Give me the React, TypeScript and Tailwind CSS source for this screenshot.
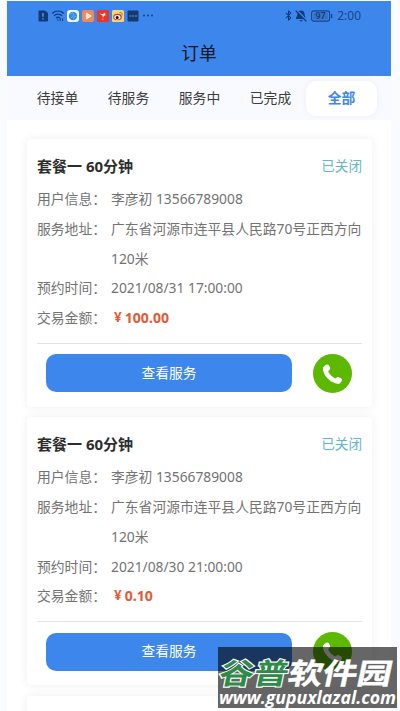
import React from "react";
import { Bluetooth, BellOff } from "lucide-react";

const tabs = ["待接单", "待服务", "服务中", "已完成", "全部"];

const orders = [
  {
    id: 1,
    title: "套餐一 60分钟",
    status: "已关闭",
    user: "李彦初 13566789008",
    address: "广东省河源市连平县人民路70号正西方向120米",
    time: "2021/08/31 17:00:00",
    amount: "100.00",
  },
  {
    id: 2,
    title: "套餐一 60分钟",
    status: "已关闭",
    user: "李彦初 13566789008",
    address: "广东省河源市连平县人民路70号正西方向120米",
    time: "2021/08/30 21:00:00",
    amount: "0.10",
  },
];

function StatusBar() {
  return (
    <div className="flex h-[29px] items-center justify-between pl-[30px] pr-[30px] text-[#123a78]">
      <div className="flex items-center gap-[3px]">
        <svg className="h-3 w-3" viewBox="0 0 12 12">
          <path d="M2.5 0.5H8L11 3v7.5a1 1 0 0 1-1 1H2.5a1 1 0 0 1-1-1v-9a1 1 0 0 1 1-1z" fill="#123a78" />
          <path d="M6 3v3.8M6 8.2v1.3" stroke="#5f9bea" strokeWidth="1.4" />
        </svg>
        <svg className="h-3 w-3" viewBox="0 0 12 12" fill="none" stroke="#123a78" strokeWidth="1.3">
          <path d="M0.3 3.4c3.4-3 8-3 11.4 0M2 5.8c2.5-2 5.5-2 8 0M3.9 8c1.4-1 2.8-1 4 0" />
          <circle cx="5.8" cy="10" r="0.8" fill="#123a78" stroke="none" />
          <path d="M8.2 8v3M10.6 11V8.4" strokeWidth="1" />
        </svg>
        <svg className="h-3 w-3" viewBox="0 0 12 12">
          <rect width="12" height="12" rx="3" fill="#f3f9ff" />
          <circle cx="6" cy="6" r="4.2" fill="#3188e3" />
          <path d="M3 4.5l3-1.8 1 2.5-3 3M6.5 9.5l1-3 2.7-.5" stroke="#a7d4fa" strokeWidth="0.5" fill="none" />
        </svg>
        <svg className="h-3 w-3" viewBox="0 0 12 12">
          <rect width="12" height="12" rx="2.5" fill="#ed8a55" />
          <path d="M4 3.3l5 2.7-5 2.7M3.6 6h2.8" stroke="#fff" strokeWidth="1.4" fill="none" strokeLinejoin="round" />
        </svg>
        <svg className="h-3 w-3" viewBox="0 0 12 12">
          <rect width="12" height="12" rx="1.5" fill="#e93628" />
          <path d="M2.5 3.5l3 .8L8.5 2.5 7.8 4.5l1.7.5-2.7.8-.8 2-.6-2.4z" fill="#fff" />
          <path d="M5 9.3h1.5" stroke="#f7b7ae" strokeWidth="0.8" />
        </svg>
        <svg className="h-3 w-3" viewBox="0 0 12 12">
          <rect width="12" height="12" rx="1.5" fill="#f4d579" />
          <ellipse cx="5.5" cy="7" rx="4.3" ry="3.3" fill="#d73b27" />
          <ellipse cx="5.4" cy="7.2" rx="3" ry="2.2" fill="#fff" />
          <circle cx="5.2" cy="7.4" r="1.5" fill="#111" />
          <path d="M7.5 2.5c2-.3 3 1 2.6 2.8" stroke="#d8632a" strokeWidth="1" fill="none" />
        </svg>
        <svg className="h-3 w-3" viewBox="0 0 12 12">
          <rect x="0.5" y="0.5" width="11" height="11" rx="1" fill="#163a6e" />
          <path d="M2.5 6H10" stroke="#5279b0" strokeWidth="1.6" strokeDasharray="2 .8" />
        </svg>
        <svg className="h-3 w-3" viewBox="0 0 12 12" fill="#123a78">
          <circle cx="2" cy="5.5" r="0.9" />
          <circle cx="6" cy="5.5" r="0.9" />
          <circle cx="10" cy="5.5" r="0.9" />
        </svg>
      </div>
      <div className="flex items-center">
        <Bluetooth className="h-[13px] w-[11px]" strokeWidth={2.2} />
        <BellOff className="ml-px h-3 w-3" strokeWidth={2.2} fill="currentColor" />
        <svg className="ml-1 h-3 w-[22px]" viewBox="0 0 22 12">
          <rect x="0.6" y="0.9" width="18" height="10.2" rx="2.4" fill="none" stroke="#1b4585" strokeWidth="1.1" />
          <rect x="2.2" y="2.5" width="14.8" height="7" rx="1" fill="#3473c9" />
          <path d="M20.6 4v4" stroke="#1b4585" strokeWidth="1.4" />
          <text x="9.6" y="9.2" textAnchor="middle" fontSize="9" fontFamily="Roboto" fill="#0d2c5c">
            97
          </text>
        </svg>
        <span className="ml-1 font-['Noto_Sans',sans-serif] text-[12px] leading-3 text-[#1b4585]">
          2:00
        </span>
      </div>
    </div>
  );
}

function Row({ label, children }: { label: string; children: React.ReactNode }) {
  return (
    <div className="flex text-[13.8px] leading-[29.75px] text-[#737373]">
      <span className="w-[74px] shrink-0 whitespace-nowrap">{label}：</span>
      <span className="min-w-0 flex-1 break-all">{children}</span>
    </div>
  );
}

function OrderCard({ order }: { order: (typeof orders)[number] }) {
  return (
    <div className="h-[268px] shrink-0 rounded-[4px] bg-white px-2.5 pt-3 shadow-[0_0_10px_rgba(0,0,0,0.07)]">
      <div className="mb-[3px] flex h-[30px] items-center justify-between">
        <h3 className="text-[15px] font-bold text-[#2d2d2d]">{order.title}</h3>
        <span className="text-[13.6px] text-[#62b7cd]">{order.status}</span>
      </div>
      <Row label="用户信息">{order.user}</Row>
      <Row label="服务地址">{order.address}</Row>
      <Row label="预约时间">{order.time}</Row>
      <Row label="交易金额">
        <span className="flex pl-[3px] font-bold text-[#e45a35]">
          <span className="mr-[3px] text-[13.5px]">¥</span>
          <span className="text-[14.1px]">{order.amount}</span>
        </span>
      </Row>
      <div className="mt-2.5 flex items-center border-t border-[#e4e4e4] pl-[9px] pt-2.5">
        <button className="h-[38px] w-[246px] rounded-[10px] bg-[#3d87ec] text-[13.8px] text-white">
          查看服务
        </button>
        <div className="ml-[21px] h-[39px] w-[39px] rounded-full bg-[#5cb800]">
          <svg
            className="h-[39px] w-[39px]"
            viewBox="0 0 39 39"
            fill="none"
            stroke="#fff"
            strokeLinecap="round"
            strokeLinejoin="round"
          >
            <path d="M12.2 14.5C12.5 20.5 18.5 26.800 25 27.5" strokeWidth="4.6" />
            <path d="M12.6 13.6L14.2 12.5L15.2 14.4L14 15.6" strokeWidth="4" />
            <path d="M23.8 26.2L25 25L27 26L25.8 27.7" strokeWidth="4" />
          </svg>
        </div>
      </div>
    </div>
  );
}

function Watermark() {
  return (
    <div className="absolute left-[218px] top-[647px] h-[61px] w-[179px] bg-black/60 text-white">
      <div className="flex h-[41px] items-center justify-center">
        <div className="-skew-x-10 scale-y-[0.84] whitespace-nowrap pt-[9px] font-['Noto_Sans_CJK_SC',sans-serif] text-[34.5px] font-bold leading-[40px]">
          <span className="text-[#2e8b48] [-webkit-text-stroke:2.6px_white] [paint-order:stroke_fill]">谷普</span>
          <span className="[-webkit-text-stroke:0.5px_white]">软件园</span>
        </div>
      </div>
      <div className="flex h-[19px] items-center justify-center whitespace-nowrap font-['Open_Sans',sans-serif] text-[17.7px] font-bold italic leading-[19px]">
        www.gupuxlazal.com
      </div>
    </div>
  );
}

export default function App() {
  return (
    <div
      lang="zh-CN"
      className="relative h-[711px] w-[400px] overflow-hidden bg-[#fafbff] pl-[7px] pr-[9px] pt-px font-['Noto_Sans','Noto_Sans_CJK_SC',sans-serif]"
    >
      <div className="flex h-[710px] flex-col overflow-hidden bg-white">
        <header className="h-[75px] shrink-0 bg-[#3d87ec]">
          <StatusBar />
          <h1 className="text-center text-[17.8px] leading-[46px] text-[#0b1524]">订单</h1>
        </header>

        <nav className="flex h-11 shrink-0 items-center bg-[#f9faff] pl-[15px]">
          {tabs.map((tab) =>
            tab === "全部" ? (
              <div
                key={tab}
                className="flex h-[35px] w-[71px] items-center justify-center rounded-[10px] bg-white text-[13.8px] font-bold text-[#3d87ec] shadow-[0_0_6px_rgba(0,0,0,0.05)]"
              >
                {tab}
              </div>
            ) : (
              <div key={tab} className="w-[71px] text-center text-[13.8px] text-[#3c3c3c]">
                {tab}
              </div>
            )
          )}
        </nav>

        <main className="flex flex-col gap-[10.4px] pl-5 pr-[19px] pt-[19px]">
          {orders.map((order) => (
            <OrderCard key={order.id} order={order} />
          ))}
          <div className="h-[268px] shrink-0 rounded-[4px] bg-white shadow-[0_0_10px_rgba(0,0,0,0.07)]" />
        </main>
      </div>
      <Watermark />
    </div>
  );
}
